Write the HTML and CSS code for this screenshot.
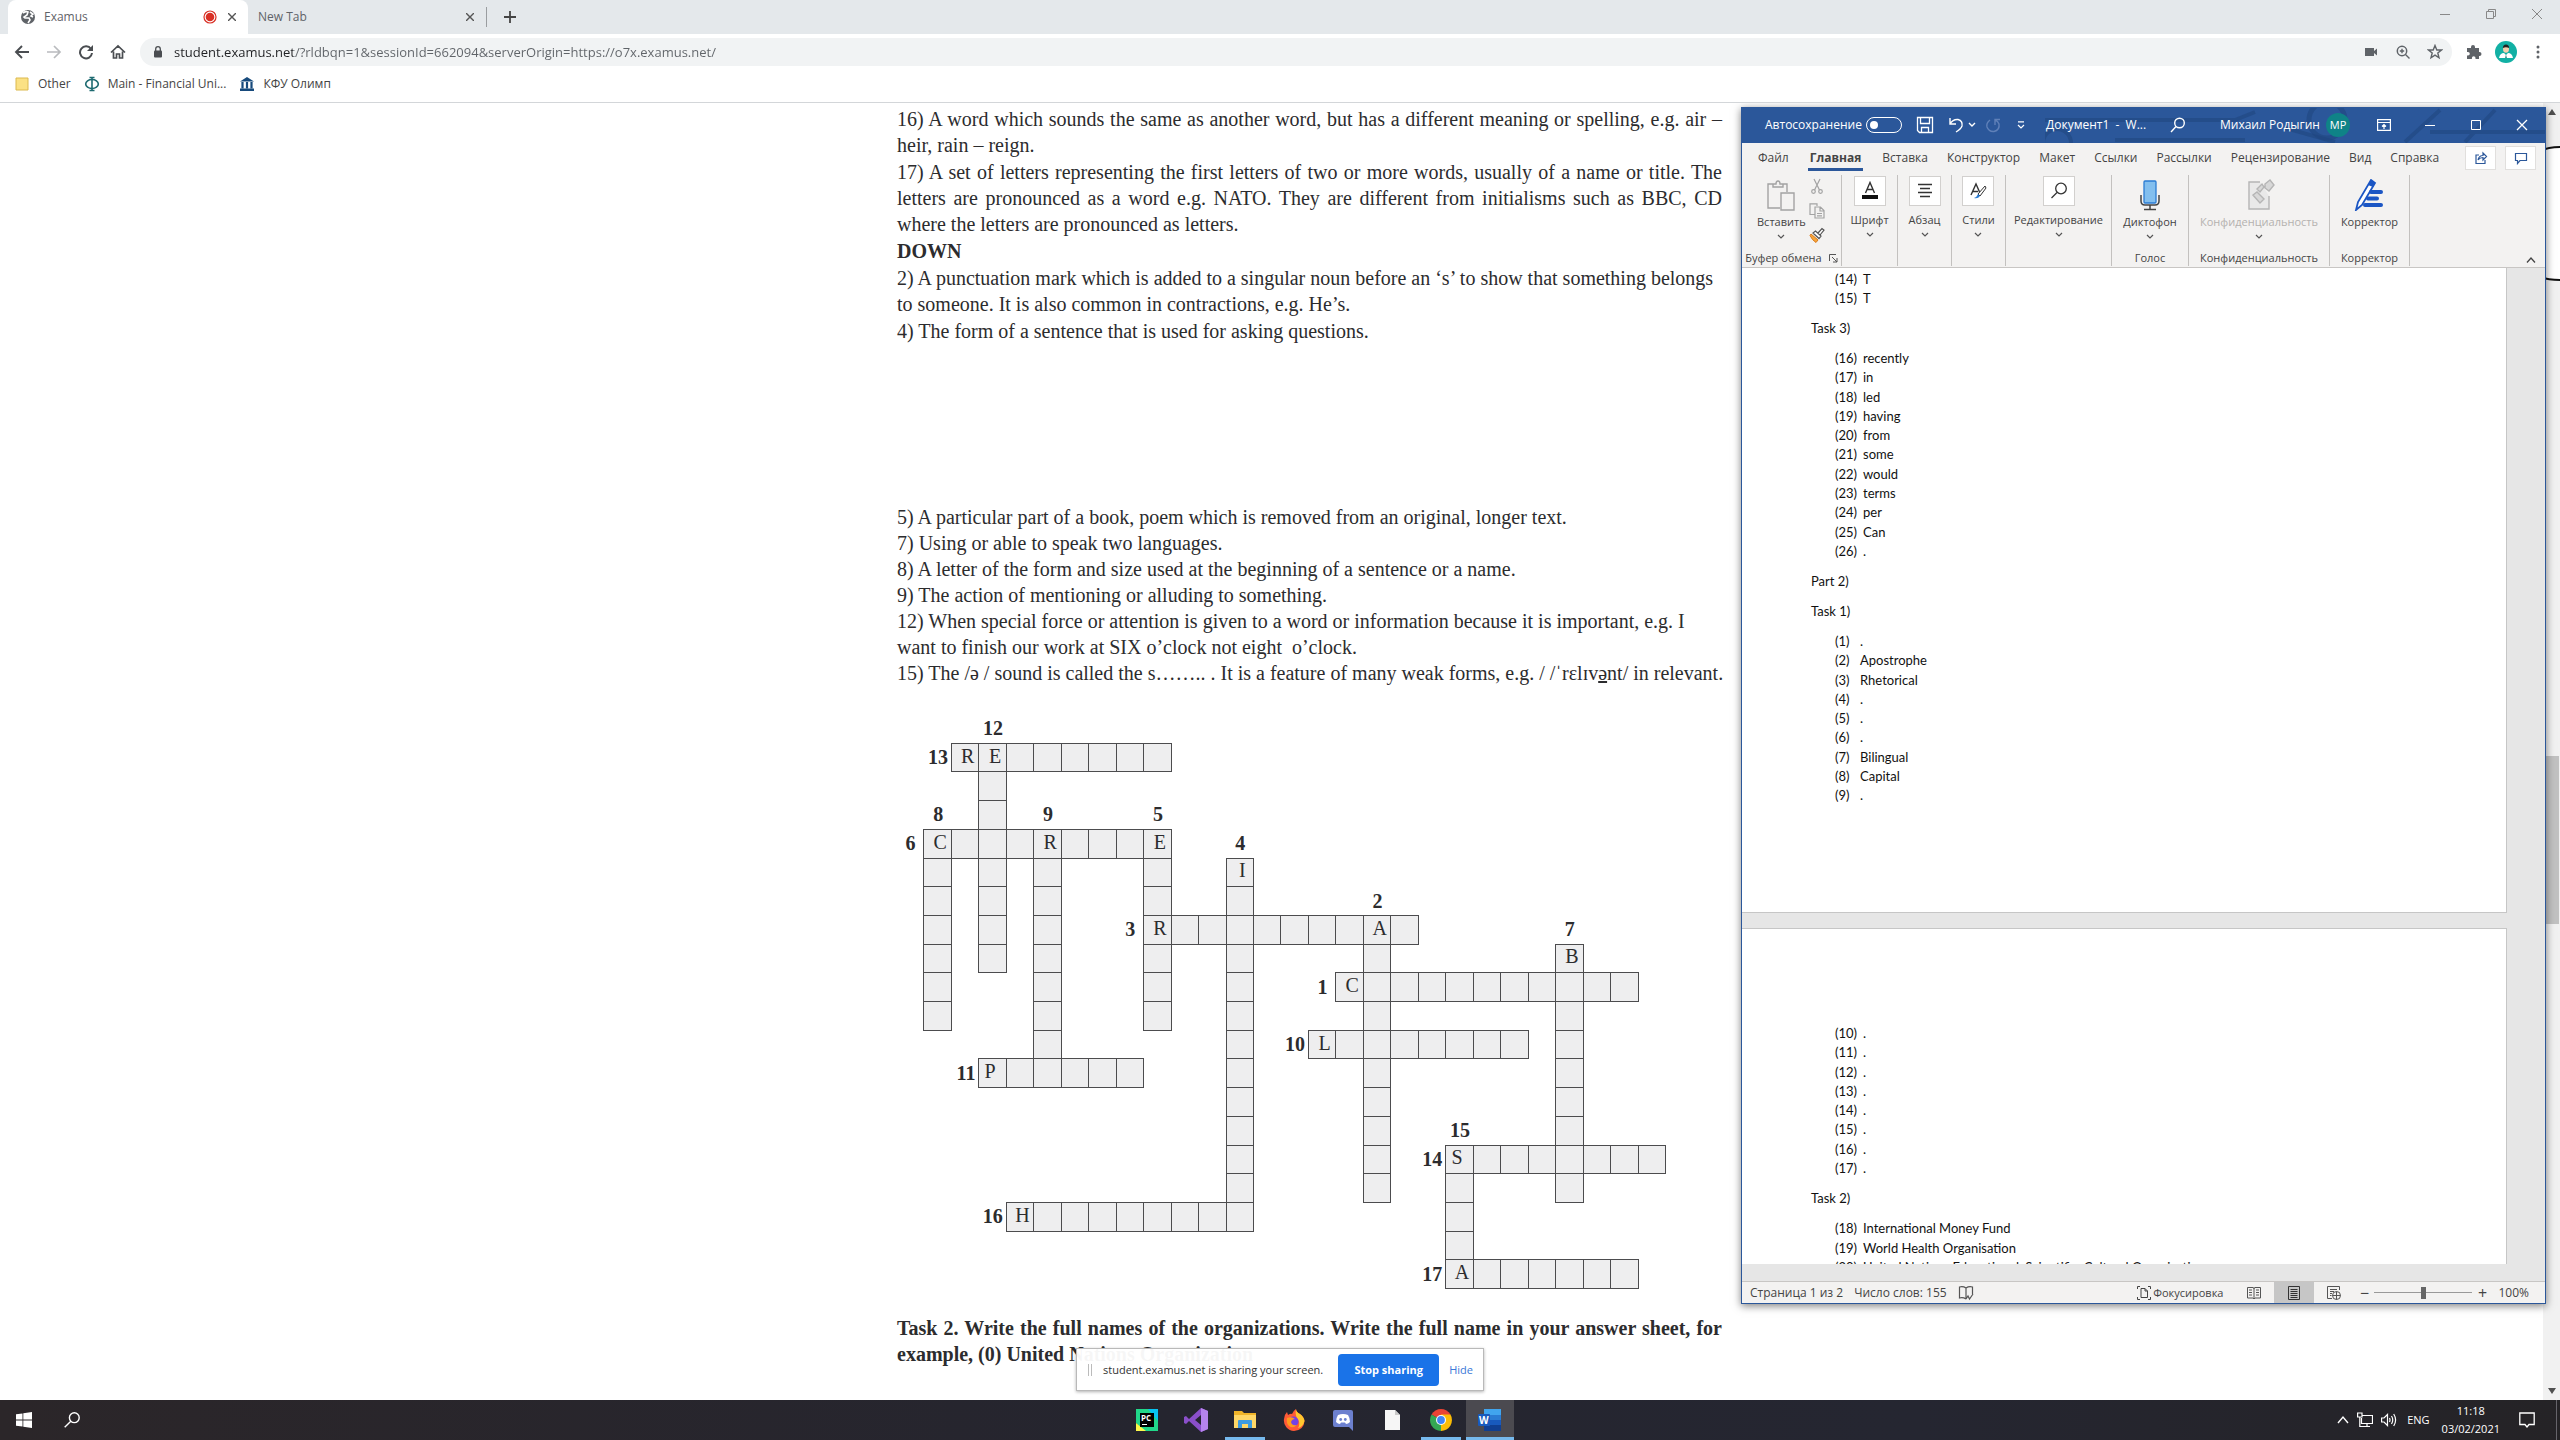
FILE: index.html
```html
<!DOCTYPE html>
<html lang="en">
<head>
<meta charset="utf-8">
<title>Examus</title>
<link rel="stylesheet" href="styles.css">
</head>
<body>
<header class="browser">
  <div class="tabstrip">
    <div class="tab tab-active">
      <svg class="i16" viewBox="0 0 16 16"><circle cx="8" cy="8" r="7" fill="#5f6368"/><path d="M3 4q3-2 5-1l-1 3-3 2 1 1h4l1 2-2 3M10 3l3 2-2 2 2 1" stroke="#fff" stroke-width="1.6" fill="none"/></svg>
      <span class="tab-title">Examus</span>
      <svg class="i16" viewBox="0 0 16 16"><circle cx="8" cy="8" r="6" fill="none" stroke="#d93025" stroke-width="1.2"/><circle cx="8" cy="8" r="4.3" fill="#d93025"/></svg>
      <button class="tab-close" aria-label="Close tab"><svg class="i8" viewBox="0 0 8 8"><path d="M0 0L8 8M8 0L0 8" stroke="#555" stroke-width="1.4"/></svg></button>
    </div>
    <div class="tab">
      <span class="tab-title">New Tab</span>
      <button class="tab-close" aria-label="Close tab"><svg class="i8" viewBox="0 0 8 8"><path d="M0 0L8 8M8 0L0 8" stroke="#555" stroke-width="1.4"/></svg></button>
    </div>
    <button class="new-tab" aria-label="New tab"><svg class="i12" viewBox="0 0 12 12"><path d="M6 0V12M0 6H12" stroke="#444" stroke-width="1.8"/></svg></button>
    <div class="win-controls">
      <button aria-label="Minimize"><svg class="i12" viewBox="0 0 12 12"><path d="M1 6.5H11" stroke="#888"/></svg></button>
      <button aria-label="Restore"><svg class="i12" viewBox="0 0 12 12"><path d="M1.500 3.500H8.500V10.500H1.500ZM3.500 3V1.500H10.500V8.500H9" stroke="#888" fill="none"/></svg></button>
      <button aria-label="Close"><svg class="i12" viewBox="0 0 12 12"><path d="M1 1L11 11M11 1L1 11" stroke="#888"/></svg></button>
    </div>
  </div>
  <div class="toolbar">
    <button class="tool" aria-label="Back"><svg class="i16" viewBox="0 0 16 16"><path d="M15 8H2M8 2L2 8L8 14" stroke="#4a4d51" stroke-width="1.9" fill="none"/></svg></button>
    <button class="tool" aria-label="Forward"><svg class="i16" viewBox="0 0 16 16"><path d="M1 8H14M8 2L14 8L8 14" stroke="#b9bbbe" stroke-width="1.7" fill="none"/></svg></button>
    <button class="tool" aria-label="Reload"><svg class="i16" viewBox="0 0 16 16"><path d="M13 5A6 6 0 1 0 14 9" stroke="#4a4d51" stroke-width="2" fill="none"/><path d="M15 1V7H9Z" fill="#4a4d51"/></svg></button>
    <button class="tool" aria-label="Home"><svg class="i16" viewBox="0 0 16 16"><path d="M1 8.500L8 2L15 8.500M3.500 7.500V14H6.500V10H9.500V14H12.500V7.500" stroke="#4a4d51" stroke-width="1.7" fill="none"/></svg></button>
    <div class="omnibox">
      <svg class="i12" viewBox="0 0 12 12"><rect x="2" y="4.500" width="8" height="7" rx="1" fill="#4a4d51"/><path d="M3.700 5V3a2.300 2.300 0 0 1 4.600 0V5" stroke="#4a4d51" stroke-width="1.300" fill="none"/></svg>
      <input class="address" type="text" aria-label="Address" value="student.examus.net/?rldbqn=1&amp;sessionId=662094&amp;serverOrigin=https://o7x.examus.net/">
      <button class="tool" aria-label="Camera"><svg class="i16" viewBox="0 0 16 16"><path d="M2 4H11V7L14 4.500V11.500L11 9V12H2Z" fill="#5f6368"/></svg></button>
      <button class="tool" aria-label="Zoom"><svg class="i16" viewBox="0 0 16 16"><circle cx="7" cy="7" r="4.700" fill="none" stroke="#5f6368" stroke-width="1.500"/><path d="M10.500 10.500L14.500 14.500M7 4.800V9.200M4.800 7H9.200" stroke="#5f6368" stroke-width="1.400"/></svg></button>
      <button class="tool" aria-label="Bookmark"><svg class="i16" viewBox="0 0 16 16"><path d="M8 1.500L9.800 6H14.500L10.800 9L12 13.800L8 11.200L4 13.800L5.200 9L1.500 6H6.200Z" fill="none" stroke="#5f6368" stroke-width="1.400"/></svg></button>
    </div>
    <button class="tool" aria-label="Extensions"><svg class="i16" viewBox="0 0 16 16"><path d="M1 4H5V3a2 2 0 0 1 4 0V4H13V8h.5a2 2 0 0 1 0 4H13V15H9.500V14a1.800 1.800 0 0 0-3.600 0V15H1V11.500H2a1.800 1.800 0 0 0 0-3.600H1Z" fill="#5f6368"/></svg></button>
    <button class="tool" aria-label="Profile"><svg class="i22" viewBox="0 0 22 22"><circle cx="11" cy="11" r="11" fill="#12b0a4"/><path d="M4 17Q5 12 9 12L11 14L13 12Q17 12 18 17Z" fill="#fff"/><ellipse cx="11" cy="8" rx="3" ry="3.800" fill="#f3cfae"/><path d="M7.800 7Q8 3.500 11 3.500T14.200 7Q11 5.500 7.800 7Z" fill="#222"/><path d="M11 13.500L10.200 17H11.800Z" fill="#12776f"/></svg></button>
    <button class="tool" aria-label="Menu"><svg class="i16" viewBox="0 0 16 16"><g fill="#5f6368"><circle cx="8" cy="3" r="1.500"/><circle cx="8" cy="8" r="1.500"/><circle cx="8" cy="13" r="1.500"/></g></svg></button>
  </div>
  <nav class="bookmarks">
    <a href="#other"><svg class="i16" viewBox="0 0 16 16"><path d="M2 2H14V14H2Z" fill="#fbe184" stroke="#dcb94f"/></svg>Other</a>
    <a href="#main"><svg class="i16" viewBox="0 0 16 16"><path d="M8 1V15M5.500 1.500H10.500M5.500 14.500H10.500" stroke="#1d6a70" stroke-width="1.600"/><ellipse cx="8" cy="8" rx="6.300" ry="4.500" fill="none" stroke="#1d6a70" stroke-width="1.600"/></svg>Main - Financial Uni...</a>
    <a href="#kfu"><svg class="i16" viewBox="0 0 16 16"><path d="M1 5.500L8 1L15 5.500ZM1 12.500H15V15H1Z" fill="#174a7c"/><path d="M3.500 6V12.500M8 6V12.500M12.500 6V12.500" stroke="#174a7c" stroke-width="2.200"/></svg>КФУ Олимп</a>
  </nav>
</header>

<main class="viewport">
  <article class="sheet">
    <section class="clues">
      <p class="wide">16) A word which sounds the same as another word, but has a different meaning or spelling, e.g. air –<br><span class="last">heir, rain – reign.</span></p>
      <p class="wide">17) A set of letters representing the first letters of two or more words, usually of a name or title. The letters are pronounced as a word e.g. NATO. They are different from initialisms such as BBC, CD<br><span class="last">where the letters are pronounced as letters.</span></p>
      <h2>DOWN</h2>
      <p>2) A punctuation mark which is added to a singular noun before an ‘s’ to show that something belongs<br>to someone. It is also common in contractions, e.g. He’s.</p>
      <p>4) The form of a sentence that is used for asking questions.</p>
    </section>
    <section class="clues clues-rest">
      <p>5) A particular part of a book, poem which is removed from an original, longer text.</p>
      <p>7) Using or able to speak two languages.</p>
      <p>8) A letter of the form and size used at the beginning of a sentence or a name.</p>
      <p>9) The action of mentioning or alluding to something.</p>
      <p>12) When special force or attention is given to a word or information because it is important, e.g. I<br>want to finish our work at SIX o’clock not eight &nbsp;o’clock.</p>
      <p>15) The /ə / sound is called the s…….. . It is a feature of many weak forms, e.g. / /ˈrɛlɪv<u>ə</u>nt/ in relevant.</p>
    </section>
    <div class="crossword" id="crossword"></div>
    <p class="task">Task 2. Write the full names of the organizations. Write the full name in your answer sheet, for<br><span class="last">example, (0) United Nations Organization</span></p>
  </article>

  <svg class="edge-shape" viewBox="0 0 20 140"><path d="M20 3Q8 3 0 7V133Q8 136 20 136" fill="#fff" stroke="#111" stroke-width="2"/><path d="M0 60l4 2-4 2M0 77l4 2-4 2" fill="#111"/></svg>
  <div class="scrollbar">
    <svg class="i12" viewBox="0 0 12 12"><path d="M2 9L6 3L10 9Z" fill="#505050"/></svg>
    <div class="track"><div class="thumb"></div></div>
    <svg class="i12" viewBox="0 0 12 12"><path d="M2 3L6 9L10 3Z" fill="#505050"/></svg>
  </div>

  <section class="word">
    <div class="word-title">
      <svg class="title-art" viewBox="0 0 500 35" fill="none" stroke="#1f4681" stroke-opacity=".6" stroke-width="4"><circle cx="12" cy="35" r="14"/><path d="M70 32H200M0 12H190L210 4M240 20L290 34M360 34L395 2M420 34L450 2M385 24H500"/><circle cx="282" cy="12" r="18" stroke-width="5"/></svg>
      <label class="autosave">Автосохранение <input type="checkbox" class="switch"></label>
      <button aria-label="Save"><svg class="i18" viewBox="0 0 18 18" fill="none" stroke="#fff" stroke-width="1.300"><path d="M1.500 1.500H16.500V16.500H3.500L1.500 14.500ZM4.500 1.500V7.500H13.500V1.500M5.500 16.500V11.500H12.500V16.500"/></svg></button>
      <button class="undo" aria-label="Undo"><svg class="i16" viewBox="0 0 16 16" fill="none" stroke="#fff" stroke-width="1.400"><path d="M2 1V7H8M2 7Q5 2 10 2.500Q15 4 14 9Q13 12 8 15"/></svg><svg class="i8" viewBox="0 0 8 8" fill="none" stroke="#fff" stroke-width="1.400"><path d="M1 2L4 5L7 2"/></svg></button>
      <button class="redo" aria-label="Redo"><svg class="i16" viewBox="0 0 16 16" fill="none" stroke="#5f80b8" stroke-width="1.400"><path d="M5 3Q1 6 2 10Q4 15 9 14.500Q15 13 14 7Q13 4 10 3M10 8V2.500H15"/></svg></button>
      <button class="more" aria-label="Customize"><svg class="i8" viewBox="0 0 8 8" fill="none" stroke="#fff" stroke-width="1.200"><path d="M1 .8H7M1 4L4 7L7 4"/></svg></button>
      <span class="doc-name">Документ1&nbsp; -&nbsp; W...</span>
      <button aria-label="Search"><svg class="i16" viewBox="0 0 16 16" fill="none" stroke="#fff" stroke-width="1.400"><circle cx="9.500" cy="6" r="4.800"/><path d="M6 9.500L1 15"/></svg></button>
      <span class="user">Михаил Родыгин</span>
      <span class="avatar">MP</span>
      <div class="word-controls">
        <button aria-label="Ribbon options"><svg class="i14" viewBox="0 0 14 14" fill="none" stroke="#fff" stroke-width="1.200"><path d="M.6 1.600H13.400V12.400H.6ZM.6 4.500H13.400M7 11V6.500M5 8.500L7 6.500L9 8.500"/></svg></button>
        <button aria-label="Minimize"><svg class="i12" viewBox="0 0 12 12" stroke="#fff"><path d="M1 6.500H11"/></svg></button>
        <button aria-label="Maximize"><svg class="i12" viewBox="0 0 12 12" fill="none" stroke="#fff"><path d="M1.500 1.500H10.500V10.500H1.500Z"/></svg></button>
        <button aria-label="Close"><svg class="i12" viewBox="0 0 12 12" stroke="#fff" stroke-width="1.300"><path d="M1 1L11 11M11 1L1 11"/></svg></button>
      </div>
    </div>
    <nav class="word-tabs">
      <button>Файл</button><button class="current">Главная</button><button>Вставка</button><button>Конструктор</button><button>Макет</button><button>Ссылки</button><button>Рассылки</button><button>Рецензирование</button><button>Вид</button><button>Справка</button>
      <button class="boxed boxed-first" aria-label="Share"><svg class="i14" viewBox="0 0 14 14" fill="none" stroke="#2b579a" stroke-width="1.200"><path d="M5 4H2V12.500H11V9M4 9Q5 4.500 9 4.500V2L12.500 5.500L9 9V6.500Q6 6.500 4 9Z"/></svg></button>
      <button class="boxed" aria-label="Comments"><svg class="i14" viewBox="0 0 14 14" fill="none" stroke="#2b579a" stroke-width="1.200"><path d="M1.500 2.500H12.500V9.500H6L3.500 12.500V9.500H1.500Z"/></svg></button>
    </nav>
    <div class="ribbon">
      <div class="group g-clip">
        <div class="clip-row">
          <button class="big"><svg class="i32" viewBox="0 0 32 32" fill="none" stroke="#a3a3a3" stroke-width="1.400"><path d="M9 5H3V29H15M22 13V5H16M8 8V5H11Q11 2 13 2T15 5H18V8ZM16 14H29V31H16Z"/></svg><span>Вставить</span><svg class="chev" viewBox="0 0 8 8"><path d="M1 3L4 6L7 3"/></svg></button>
          <div class="mini">
            <button aria-label="Cut"><svg class="i16" viewBox="0 0 16 16" fill="none" stroke="#a3a3a3" stroke-width="1.200"><path d="M5 1L10.500 12M11 1L5.500 12"/><circle cx="4.500" cy="13.500" r="1.800"/><circle cx="11.500" cy="13.500" r="1.800"/></svg></button>
            <button aria-label="Copy"><svg class="i16" viewBox="0 0 16 16" fill="none" stroke="#a3a3a3" stroke-width="1.200"><path d="M6 11.500H1V.8H8V3M6 4H11.500L15 7.500V15H6ZM11 4V8H15M8 10.500H13M8 12.800H13"/></svg></button>
            <button aria-label="Format painter"><svg class="i16" viewBox="0 0 16 16"><path d="M2 7L9 13L7 15.500Q3 13 1 8.500Z" fill="#f6a63a" stroke="#d9791a"/><path d="M4 6L10 11.500L12 9L6.500 4ZM9 6L13 1.500L15 3L11 8" fill="#fff" stroke="#555" stroke-width="1.200"/></svg></button>
          </div>
        </div>
        <span class="caption">Буфер обмена <svg class="i10" viewBox="0 0 10 10" fill="none" stroke="#555"><path d="M8 1.500H1.500V8M4 4L9 9M9 5V9H5"/></svg></span>
      </div>
      <div class="group g-font"><button class="framed"><span class="frame"><svg class="i20" viewBox="0 0 20 20"><path d="M5.500 12L10 1.500L14.500 12M7 8.500H13" fill="none" stroke="#333" stroke-width="1.400"/><path d="M2 14H18V18H2Z" fill="#111"/></svg></span><span>Шрифт</span><svg class="chev" viewBox="0 0 8 8"><path d="M1 3L4 6L7 3"/></svg></button></div>
      <div class="group g-mid"><button class="framed"><span class="frame"><svg class="i20" viewBox="0 0 20 20" stroke="#333" stroke-width="1.300"><path d="M3 3.500H17M5 7.500H15M3 11.500H17M5 15.500H15"/></svg></span><span>Абзац</span><svg class="chev" viewBox="0 0 8 8"><path d="M1 3L4 6L7 3"/></svg></button></div>
      <div class="group g-mid"><button class="framed"><span class="frame"><svg class="i20" viewBox="0 0 20 20"><path d="M3 14L8 3L12 12M4.500 10.500H10" fill="none" stroke="#333" stroke-width="1.400"/><path d="M17 5L10 13L12 15L18 7Z" fill="#fff" stroke="#333"/><path d="M10 13L12 15Q10 18 6 17Q9 16 10 13Z" fill="#2b7cd3"/></svg></span><span>Стили</span><svg class="chev" viewBox="0 0 8 8"><path d="M1 3L4 6L7 3"/></svg></button></div>
      <div class="group g-edit"><button class="framed"><span class="frame"><svg class="i20" viewBox="0 0 20 20" fill="none" stroke="#333" stroke-width="1.300"><circle cx="12" cy="7.500" r="5.300"/><path d="M8 11.500L2.500 17"/></svg></span><span>Редактирование</span><svg class="chev" viewBox="0 0 8 8"><path d="M1 3L4 6L7 3"/></svg></button></div>
      <div class="group g-voice"><button class="big"><svg class="i32" viewBox="0 0 32 32" fill="none"><rect x="10" y="2" width="12" height="22" rx="1" fill="#83bfee" stroke="#2b7cd3" stroke-width="1.300"/><path d="M7 16V22Q7 26 11 26H21Q25 26 25 22V16M16 26V30M10 30.500H22" stroke="#444" stroke-width="1.500"/></svg><span>Диктофон</span><svg class="chev" viewBox="0 0 8 8"><path d="M1 3L4 6L7 3"/></svg></button><span class="caption">Голос</span></div>
      <div class="group g-priv"><button class="big off" disabled><svg class="i32" viewBox="0 0 32 32" fill="none" stroke="#b5b5b5" stroke-width="1.400"><path d="M17 3H6V30H26V17" fill="#e9e9e9"/><path d="M10 16l4-3 7 7-4 4ZM14 10l5-5 2 3-4 5ZM22 5l5-4 4 5-5 6-4-3Z" fill="#d8d8d8"/></svg><span>Конфиденциальность</span><svg class="chev" viewBox="0 0 8 8"><path d="M1 3L4 6L7 3"/></svg></button><span class="caption">Конфиденциальность</span></div>
      <div class="group g-editor"><button class="big"><svg class="i32" viewBox="0 0 32 32"><path d="M18 1L22 4L9 26L3 31L5 23Z" fill="#fff" stroke="#1b56c4" stroke-width="1.800"/><path d="M18 1L22 4L20 8L15 6Z" fill="#1b56c4"/><path d="M18 13H28M15 19.500H24M12 26H28" stroke="#1b56c4" stroke-width="4" stroke-linecap="round"/></svg><span>Корректор</span></button><span class="caption">Корректор</span></div>
      <button class="collapse" aria-label="Collapse ribbon"><svg class="i12" viewBox="0 0 12 12" fill="none" stroke="#444" stroke-width="1.300"><path d="M2 8.500L6 4L10 8.500"/></svg></button>
    </div>
    <div class="canvas">
      <div class="page page-one">
        <ol class="answers a2"><li><b>(14)</b>T</li><li><b>(15)</b>T</li></ol>
        <h3>Task 3)</h3>
        <ol class="answers a11"><li><b>(16)</b>recently</li><li><b>(17)</b>in</li><li><b>(18)</b>led</li><li><b>(19)</b>having</li><li><b>(20)</b>from</li><li><b>(21)</b>some</li><li><b>(22)</b>would</li><li><b>(23)</b>terms</li><li><b>(24)</b>per</li><li><b>(25)</b>Can</li><li><b>(26)</b>.</li></ol>
        <h3>Part 2)</h3>
        <h3>Task 1)</h3>
        <ol class="answers short a9"><li><b>(1)</b>.</li><li><b>(2)</b>Apostrophe</li><li><b>(3)</b>Rhetorical</li><li><b>(4)</b>.</li><li><b>(5)</b>.</li><li><b>(6)</b>.</li><li><b>(7)</b>Bilingual</li><li><b>(8)</b>Capital</li><li><b>(9)</b>.</li></ol>
      </div>
      <div class="page page-two">
        <ol class="answers a8"><li><b>(10)</b>.</li><li><b>(11)</b>.</li><li><b>(12)</b>.</li><li><b>(13)</b>.</li><li><b>(14)</b>.</li><li><b>(15)</b>.</li><li><b>(16)</b>.</li><li><b>(17)</b>.</li></ol>
        <h3>Task 2)</h3>
        <ol class="answers a3"><li><b>(18)</b>International Money Fund</li><li><b>(19)</b>World Health Organisation</li><li><b>(20)</b>United Nations Educational, Scientific, Cultural Organisation</li></ol>
      </div>
    </div>
    <footer class="status">
      <span>Страница 1 из 2</span><span>Число слов: 155</span>
      <svg class="i16" viewBox="0 0 16 16" fill="none" stroke="#555" stroke-width="1.200"><path d="M8 3Q5 1 1.500 2V13Q5 12 8 14M8 3V14M8 3Q11 1 14.500 2V9M8 14L10 11L11.500 14L15 9"/></svg>
      <button class="focus"><svg class="i14" viewBox="0 0 14 14" fill="none" stroke="#444"><path d="M3 .5H.5V3M11 .5H13.500V3M.5 11V13.500H3M13.500 11V13.500H11M4 2.500H8L10.500 5V11.500H4ZM8 2.500V5H10.500"/></svg>Фокусировка</button>
      <div class="views">
        <button aria-label="Read mode"><svg class="i14" viewBox="0 0 14 14" fill="none" stroke="#555"><path d="M.5 1.500H6Q7 1.500 7 3V13L6 12H.5ZM13.500 1.500H8Q7 1.500 7 3M13.500 1.500V12H8L7 13M2 4H5M2 6.500H5M2 9H5M9 4H12M9 6.500H12M9 9H12"/></svg></button>
        <button class="on" aria-label="Print layout"><svg class="i14" viewBox="0 0 14 14" fill="none" stroke="#333"><path d="M1.500 .5H12.500V13.500H1.500ZM3.500 3.500H10.500M3.500 5.500H10.500M3.500 7.500H10.500M3.500 9.500H10.500M3.500 11.500H10.500"/></svg></button>
        <button aria-label="Web layout"><svg class="i14" viewBox="0 0 14 14" fill="none" stroke="#555"><path d="M5 12.500H.5V.5H12.500V4M3 3.500H10M3 5.500H7M3 7.500H5M3 9.500H4.500"/><circle cx="9.500" cy="9.500" r="4"/><path d="M5.500 9.500H13.500M9.500 5.500V13.500"/></svg></button>
      </div>
      <div class="zoom"><button aria-label="Zoom out">−</button><input type="range" min="0" max="100" value="50" aria-label="Zoom"><button aria-label="Zoom in">+</button><span>100%</span></div>
    </footer>
  </section>

  <div class="sharing">
    <svg class="grip" viewBox="0 0 6 12"><path d="M1.500 0V12M4.500 0V12" stroke="#bbb"/></svg>
    <span>student.examus.net is sharing your screen.</span>
    <button class="stop">Stop sharing</button>
    <a href="#hide">Hide</a>
  </div>
</main>

<footer class="taskbar">
  <div class="task-left">
    <button aria-label="Start"><svg class="i16" viewBox="0 0 16 16" fill="#fff"><path d="M0 2.300L6.500 1.400V7.600H0ZM7.300 1.300L16 0V7.600H7.300ZM0 8.400H6.500V14.600L0 13.700ZM7.300 8.400H16V16L7.300 14.700Z"/></svg></button>
    <button aria-label="Search"><svg class="i16" viewBox="0 0 16 16" fill="none" stroke="#fff" stroke-width="1.400"><circle cx="10.300" cy="5.700" r="4.900"/><path d="M6.800 9.200L.7 15.300"/></svg></button>
  </div>
  <div class="task-apps">
    <button aria-label="PyCharm"><svg class="i22" viewBox="0 0 22 22"><path d="M0 0H14L22 6V22H8L0 14Z" fill="#21d789"/><path d="M12 0H22V12Z" fill="#07c3f2"/><path d="M0 14L10 22H0Z" fill="#fcf84a"/><rect x="4" y="4" width="14" height="14" fill="#000"/><path d="M6 15.500H11" stroke="#fff"/><text x="5" y="12" font-size="8" font-weight="700" fill="#fff">PC</text></svg></button>
    <button aria-label="Visual Studio"><svg class="i24" viewBox="0 0 24 24"><path d="M17 0L24 3V21L17 24L5 13L2 16L0 15V9L2 8L5 11ZM17 7L11 12L17 17Z" fill="#8a4fc9" fill-rule="evenodd"/><path d="M17 0L24 3V21L17 24Z" fill="#b583ec"/></svg></button>
    <button class="running" aria-label="File Explorer"><svg class="i22" viewBox="0 0 22 22"><path d="M0 2H8L10 4H22V19H0Z" fill="#f0b429"/><path d="M0 6H22V19H0Z" fill="#ffd767"/><path d="M4 19V12Q4 11 5 11H17Q18 11 18 12V19H14V15H8V19Z" fill="#3d9be0"/></svg></button>
    <button aria-label="Firefox"><svg class="i22" viewBox="0 0 22 22"><path d="M11 22A10.500 10.500 0 0 1 1 10Q1 6 4 3L5 6Q8 4 9 5Q10 2 13 0Q13 3 17 5Q21 8 21.500 12Q21 21 11 22Z" fill="#ff5a36"/><path d="M13 0Q13 3 17 5Q21 8 21.500 12Q20 18 15 19Q18 14 14 9Q12 6 13 0Z" fill="#ffc72e"/><circle cx="10.500" cy="12.500" r="5" fill="#7542e5"/><path d="M4 9Q9 7 12 10Q9 10 8 13Q9 17 14 16Q10 20 6 17Q3 14 4 9Z" fill="#ff9a1f"/></svg></button>
    <button aria-label="Discord"><svg class="i22" viewBox="0 0 22 22"><path d="M3 1H19Q21 1 21 3V22L17 18H3Q1 18 1 16V3Q1 1 3 1Z" fill="#6c80cf"/><path d="M6 6Q11 4 16 6Q18 9 18 13Q16 15 14 15L13 13.500H9L8 15Q6 15 4 13Q4 9 6 6Z" fill="#fff"/><circle cx="8.700" cy="10.500" r="1.400" fill="#6c80cf"/><circle cx="13.300" cy="10.500" r="1.400" fill="#6c80cf"/></svg></button>
    <button aria-label="Document"><svg class="i22" viewBox="0 0 22 22"><path d="M4 1H14L19 6V21H4Z" fill="#f6f6f6"/><path d="M14 1V6H19Z" fill="#c9c9c9"/></svg></button>
    <button class="running" aria-label="Chrome"><svg class="i22" viewBox="0 0 22 22"><path d="M11 11L1.500 5.500A11 11 0 0 1 20.500 5.500Z" fill="#e94335"/><path d="M11 11L1.500 5.500A11 11 0 0 0 11 22Z" fill="#34a853"/><path d="M11 11L11 22A11 11 0 0 0 20.500 5.500H11Z" fill="#fbbc05"/><circle cx="11" cy="11" r="5" fill="#fff"/><circle cx="11" cy="11" r="3.900" fill="#4285f4"/></svg></button>
    <button class="running focused" aria-label="Word"><svg class="i24" viewBox="0 0 24 24"><path d="M6 1H23V7H6Z" fill="#41a5ee"/><path d="M6 7H23V12H6Z" fill="#2b7cd3"/><path d="M6 12H23V17H6Z" fill="#185abd"/><path d="M6 17H23V23H6Z" fill="#103f91"/><rect x="0" y="6" width="12" height="12" rx="1" fill="#185abd"/><text x="1" y="16" font-size="10" font-weight="700" fill="#fff">W</text></svg></button>
  </div>
  <div class="tray">
    <svg class="i12" viewBox="0 0 12 12" fill="none" stroke="#fff" stroke-width="1.400"><path d="M1 9L6 3L11 9"/></svg>
    <svg class="i16" viewBox="0 0 16 16" fill="none" stroke="#fff" stroke-width="1.200"><path d="M5 3.500H15.500V11.500H4.500V6M10 11.500V14.500M6 14.500H13M.6 1H5V5H.6ZM2.800 5V14.500H6"/></svg>
    <svg class="i16" viewBox="0 0 16 16" fill="none" stroke="#fff" stroke-width="1.200"><path d="M.6 6H3L6.500 2.500V13.500L3 10H.6ZM8.500 6Q9.500 8 8.500 10M10.500 4Q13 8 10.500 12M12.700 2Q16.500 8 12.700 14"/></svg>
    <span class="lang">ENG</span>
    <span class="clock">11:18<br>03/02/2021</span>
    <button aria-label="Notifications"><svg class="i16" viewBox="0 0 16 16" fill="none" stroke="#fff" stroke-width="1.300"><path d="M.8 1H15.200V12.500H10L8 15L6 12.500H.8Z"/></svg></button>
    <i class="peek"></i>
  </div>
</footer>
<script src="crossword.js"></script>
</body>
</html>
```
FILE: styles.css
```css
* { box-sizing: border-box; }
html, body { height: 100%; }
body {
  margin: 0;
  display: flex;
  flex-direction: column;
  overflow: hidden;
  background: #fff;
  color: #444;
  font: 12px/16px "Open Sans", "Noto Sans", sans-serif;
}
button {
  margin: 0; padding: 0; border: 0; background: none;
  font: inherit; color: inherit;
  display: flex; align-items: center; justify-content: center;
}
a { color: inherit; text-decoration: none; }
svg { flex: none; display: block; }
h2, h3, p, ol { margin: 0; padding: 0; font: inherit; }
.i8 { width: 8px; height: 8px; }
.i10 { width: 10px; height: 10px; }
.i12 { width: 12px; height: 12px; }
.i14 { width: 14px; height: 14px; }
.i16 { width: 16px; height: 16px; }
.i18 { width: 18px; height: 18px; }
.i20 { width: 20px; height: 20px; }
.i22 { width: 22px; height: 22px; }
.i24 { width: 24px; height: 24px; }
.i32 { width: 32px; height: 32px; }

/* Browser frame */
.browser { flex: none; border-bottom: 1px solid #d3d6d9; }
.tabstrip { display: flex; height: 34px; padding-left: 8px; background: #e4e8eb; }
.tab { width: 238px; padding: 0 10px; display: flex; align-items: center; gap: 8px; color: #5f6368; }
.tab-active { width: 240px; padding-left: 12px; background: #fff; border-radius: 8px 8px 0 0; }
.tab-title { flex: 1; }
.tab-close { width: 12px; height: 16px; }
.new-tab { width: 46px; border-left: 1px solid #9a9da0; height: 20px; align-self: center; }
.win-controls { display: flex; margin-left: auto; }
.win-controls button { width: 46px; height: 28px; }
.toolbar { display: flex; align-items: center; height: 36px; padding: 0 6px; }
.tool { width: 32px; height: 28px; }
.omnibox { flex: 1; display: flex; align-items: center; height: 28px; margin: 0 6px; padding: 0 1px 0 12px; border-radius: 14px; background: #f1f3f4; }
.address {
  flex: 1; margin-left: 10px; padding: 0; border: 0; outline: 0;
  font: 13px/20px "Open Sans", sans-serif; color: #5f6368;
  background: linear-gradient(to right, #202124 119px, #5f6368 119px);
  -webkit-background-clip: text; background-clip: text;
  -webkit-text-fill-color: transparent;
}
.bookmarks { display: flex; gap: 13px; height: 32px; padding: 0 14px 4px; align-items: center; }
.bookmarks a { display: flex; align-items: center; gap: 8px; }

/* Shared page */
.viewport { position: relative; flex: 1; min-height: 0; overflow: hidden; display: flex; }
.sheet { flex: none; width: 826px; margin-left: 35%; padding: 3px 0 0 1px; color: #2c2c2e; font: 20px/26px "Liberation Serif", serif; }
.clues { display: flex; flex-direction: column; gap: 1px; white-space: nowrap; }
.clues-rest { margin-top: 160px; gap: 0; }
.wide, .task { white-space: normal; text-align: justify; text-align-last: justify; }
.last { display: block; text-align-last: left; }
.clues h2, .task { font-weight: 700; }
.crossword {
  display: grid;
  width: 769px; height: 574px; margin-top: 29px;
  grid-template-columns: repeat(28, 1fr);
  grid-template-rows: repeat(20, 1fr);
}
.cell { display: flex; align-items: center; justify-content: center; padding: 0 0 4px 5px; background: #eeeeef; box-shadow: 0 0 0 1px #4c4c4e; line-height: 20px; min-width: 0; min-height: 0; margin: 0 1px 1px 0; }
.cell-near { padding: 0 5px 4px 0; }
.mark { display: flex; align-items: center; justify-content: center; padding-bottom: 2px; font-weight: 700; min-width: 0; min-height: 0; line-height: 20px; }
.mark-side { justify-content: flex-end; padding-right: 4px; }
.mark-single { padding-right: 9px; }
.task { margin-top: 26px; }

.scrollbar { flex: none; width: 17px; margin-left: auto; padding: 3px 0; display: flex; flex-direction: column; align-items: center; background: #f1f1f1; }
.track { flex: 1; align-self: stretch; padding: 0 1px; display: flex; flex-direction: column; }
.track::before { content: ""; flex: 635; }
.track::after { content: ""; flex: 459; }
.thumb { flex: 168; background: #c1c1c1; }
.edge-shape { position: absolute; right: 0; top: 41px; width: 20px; height: 140px; z-index: 1; }

/* Word window */
.word {
  position: absolute; z-index: 2; top: 4px; right: 14px; bottom: 96px; width: 805px;
  display: flex; flex-direction: column;
  border: 1px solid #2b579a; background: #f3f2f1; box-shadow: 0 2px 8px rgba(0, 0, 0, .5);
}
.word-title { position: relative; flex: none; height: 35px; padding: 0 0 2px 23px; display: flex; align-items: center; background: #2b579a; color: #fff; }
.title-art { position: absolute; right: 0; top: 0; width: 500px; height: 35px; overflow: hidden; }
.word-title > *:not(.title-art) { position: relative; }
.autosave { display: flex; align-items: center; gap: 4px; width: 137px; white-space: nowrap; justify-content: flex-end; }
.switch { appearance: none; width: 38px; height: 16px; margin: 0; border: 1px solid #fff; border-radius: 8px; display: flex; align-items: center; padding-left: 3px; }
.switch::before { content: ""; width: 8px; height: 8px; border-radius: 50%; background: #fff; }
.word-title > button { width: 22px; height: 24px; margin-left: 12px; }
.word-title > .undo { width: 36px; gap: 4px; margin-left: 8px; }
.word-title > .redo { width: 16px; margin-left: 5px; }
.word-title > .more { width: 12px; margin-left: 14px; }
.doc-name { width: 98px; margin-left: 19px; white-space: nowrap; }
.word-title > .doc-name + button { margin-left: 23px; }
.user { width: 96px; margin-left: 31px; white-space: nowrap; }
.avatar { width: 24px; height: 24px; margin-left: 10px; border-radius: 50%; background: #0f8387; text-align: center; line-height: 24px; font-size: 11px; }
.word-controls { display: flex; margin-left: auto; }
.word-controls button { width: 46px; height: 33px; }
.word-tabs { flex: none; display: flex; align-items: center; height: 32px; padding: 0 9px 2px 16px; gap: 19px; }
.word-tabs button { height: 24px; }
.word-tabs .current { padding: 0 2px; font-weight: 700; border-bottom: 3px solid #2b579a; border-top: 3px solid transparent; height: 26px; }
.word-tabs .boxed { width: 31px; background: #fff; border: 1px solid #e1dfdd; }
.word-tabs .boxed-first { margin: 0 -10px 0 auto; }
.ribbon { flex: none; display: flex; height: 93px; padding-bottom: 1px; border-bottom: 1px solid #c8c6c4; font-size: 11px; }
.group { flex: none; display: flex; flex-direction: column; align-items: center; border-right: 1px solid #c3c1bf; }
.g-clip { width: 100px; } .g-font { width: 56px; } .g-mid { width: 54px; } .g-edit { width: 106px; }
.g-voice { width: 77px; } .g-priv { width: 141px; } .g-editor { width: 80px; }
.clip-row { display: flex; gap: 3px; align-self: stretch; padding-left: 15px; }
.mini { display: flex; flex-direction: column; justify-content: space-between; padding: 3px 0 2px; height: 70px; }
.big, .framed { flex-direction: column; justify-content: flex-start; }
.big .i32 { margin: 4px 0 3px; }
.frame { display: flex; align-items: center; justify-content: center; width: 32px; height: 30px; margin: 1px 0 6px; background: #fff; border: 1px solid #d2d0ce; }
.chev { width: 8px; height: 8px; margin-top: 2px; fill: none; stroke: #555; stroke-width: 1.2; }
.caption { display: flex; align-items: center; gap: 6px; margin-top: auto; white-space: nowrap; }
.off { color: #b3b1af; }
.collapse { margin: auto 7px 0 auto; width: 14px; }
.canvas { flex: 1; min-height: 0; display: flex; flex-direction: column; gap: 15px; padding-bottom: 17px; background: #e6e6e6; }
.page { margin-right: 38px; padding-left: 69px; background: #fff; color: #111; font: 13px/19px Lato, "Open Sans", sans-serif; border-right: 1px solid #c6c6c6; }
.page-one { flex: none; height: 645px; border-bottom: 1px solid #c6c6c6; padding-top: 2px; }
.page-two { flex: 1; min-height: 0; overflow: hidden; padding-top: 95px; border-top: 1px solid #c6c6c6; }
.page h3 { margin: 11px 0; }
.answers { list-style: none; margin-left: 24px; display: flex; flex-direction: column; justify-content: space-between; }
.answers li { display: flex; white-space: nowrap; }
.answers b { flex: none; width: 28px; font-weight: 400; }
.short b { width: 25px; }
.a2 { height: 38px; } .a11 { height: 212px; } .a9 { height: 173px; } .a8 { height: 154px; } .a3 { height: 58px; }
.status { flex: none; display: flex; align-items: center; height: 22px; padding: 0 16px 0 8px; border-top: 1px solid #c8c6c4; gap: 11px; white-space: nowrap; }
.focus { margin-left: auto; gap: 2px; font-size: 11px; }
.views { display: flex; align-self: stretch; }
.views button { width: 40px; height: 21px; }
.views .on { background: #c6c6c6; }
.zoom { display: flex; align-items: center; gap: 4px; margin-left: -7px; }
.zoom button { width: 12px; font-size: 16px; }
.zoom span { margin-left: 6px; }
.zoom input { appearance: none; width: 98px; height: 16px; margin: 0; background: linear-gradient(#999, #999) center / 100% 1px no-repeat; }
.zoom input::-webkit-slider-thumb { appearance: none; width: 5px; height: 12px; background: #666; }

/* Screen sharing notice */
.sharing {
  position: absolute; z-index: 3; left: 50%; bottom: 9px; transform: translateX(-50%);
  width: 408px; height: 43px; padding: 0 10px; display: flex; align-items: center;
  background: rgba(255, 255, 255, .96); border: 1px solid #b9b9b9; box-shadow: 0 1px 3px rgba(0, 0, 0, .3); white-space: nowrap; color: #333; font-size: 11px;
}
.grip { width: 6px; height: 12px; margin-right: 10px; }
.stop { width: 101px; height: 32px; margin: 0 10px 0 auto; border-radius: 4px; background: #1a73e8; color: #fff; font-weight: 700; }
.sharing a { color: #3b78d8; }

/* Taskbar */
.taskbar { flex: none; height: 40px; display: flex; justify-content: space-between; background: linear-gradient(to right, #2b2629, #25252f 45%, #252631 75%, #252326); color: #fff; font-size: 11px; }
.task-left { display: flex; flex: 1; }
.task-left button { width: 48px; }
.task-apps { display: flex; gap: 1px; flex: none; margin-left: 77px; }
.task-apps button { width: 48px; border: solid transparent; border-width: 3px 0; }
.task-apps text { font-family: "Open Sans", sans-serif; }
.task-apps .running { background: linear-gradient(#76b9ed, #76b9ed) center bottom / 40px 3px no-repeat border-box; }
.task-apps .focused { background: linear-gradient(#76b9ed, #76b9ed) center bottom / 48px 3px no-repeat border-box, #4b4a50 border-box; }
.tray { display: flex; flex: 1; align-items: center; justify-content: flex-end; }
.tray svg + svg { margin-left: 8px; }
.lang { margin: 0 12px 0 10px; }
.clock { text-align: center; line-height: 18px; }
.tray button { width: 54px; }
.peek { width: 4px; height: 40px; border-left: 1px solid #66646a; margin-left: 2px; }
```
FILE: crossword.js
```js
// Each word: clue number, direction, first column, first row, length.
const words = [
  [13, 'across', 1, 0, 8], [6, 'across', 0, 3, 9], [3, 'across', 8, 6, 10],
  [1, 'across', 15, 8, 11], [10, 'across', 14, 10, 8], [11, 'across', 2, 11, 6],
  [14, 'across', 19, 14, 8], [16, 'across', 3, 16, 9], [17, 'across', 19, 18, 7],
  [12, 'down', 2, 0, 8], [8, 'down', 0, 3, 7], [9, 'down', 4, 3, 9],
  [5, 'down', 8, 3, 7], [4, 'down', 11, 4, 13], [2, 'down', 16, 6, 10],
  [7, 'down', 23, 7, 9], [15, 'down', 19, 14, 5]
];
const letters = {
  '1,0': 'R', '2,0': 'E', '0,3': 'C', '4,3': 'R', '8,3': 'E', '11,4': 'I',
  '8,6': 'R', '16,6': 'A', '23,7': 'B', '15,8': 'C', '14,10': 'L',
  '2,11': 'P', '19,14': 'S', '3,16': 'H', '19,18': 'A'
};
const board = document.getElementById('crossword');
const drawn = new Set();

function add(className, col, row, text) {
  const el = document.createElement('span');
  el.className = className;
  el.style.gridArea = `${row + 2} / ${col + 2}`;
  el.textContent = text;
  board.append(el);
}

for (const [number, direction, col, row, length] of words) {
  const across = direction === 'across';
  const side = number < 10 ? ' mark-side mark-single' : ' mark-side';
  add('mark' + (across ? side : ''), across ? col - 1 : col, across ? row : row - 1, number);
  for (let i = 0; i < length; i++) {
    const c = across ? col + i : col;
    const r = across ? row : row + i;
    const key = `${c},${r}`;
    if (drawn.has(key)) continue;
    drawn.add(key);
    const letter = letters[key] || '';
    add('cell' + ('PS'.includes(letter) && letter ? ' cell-near' : ''), c, r, letter);
  }
}
```
